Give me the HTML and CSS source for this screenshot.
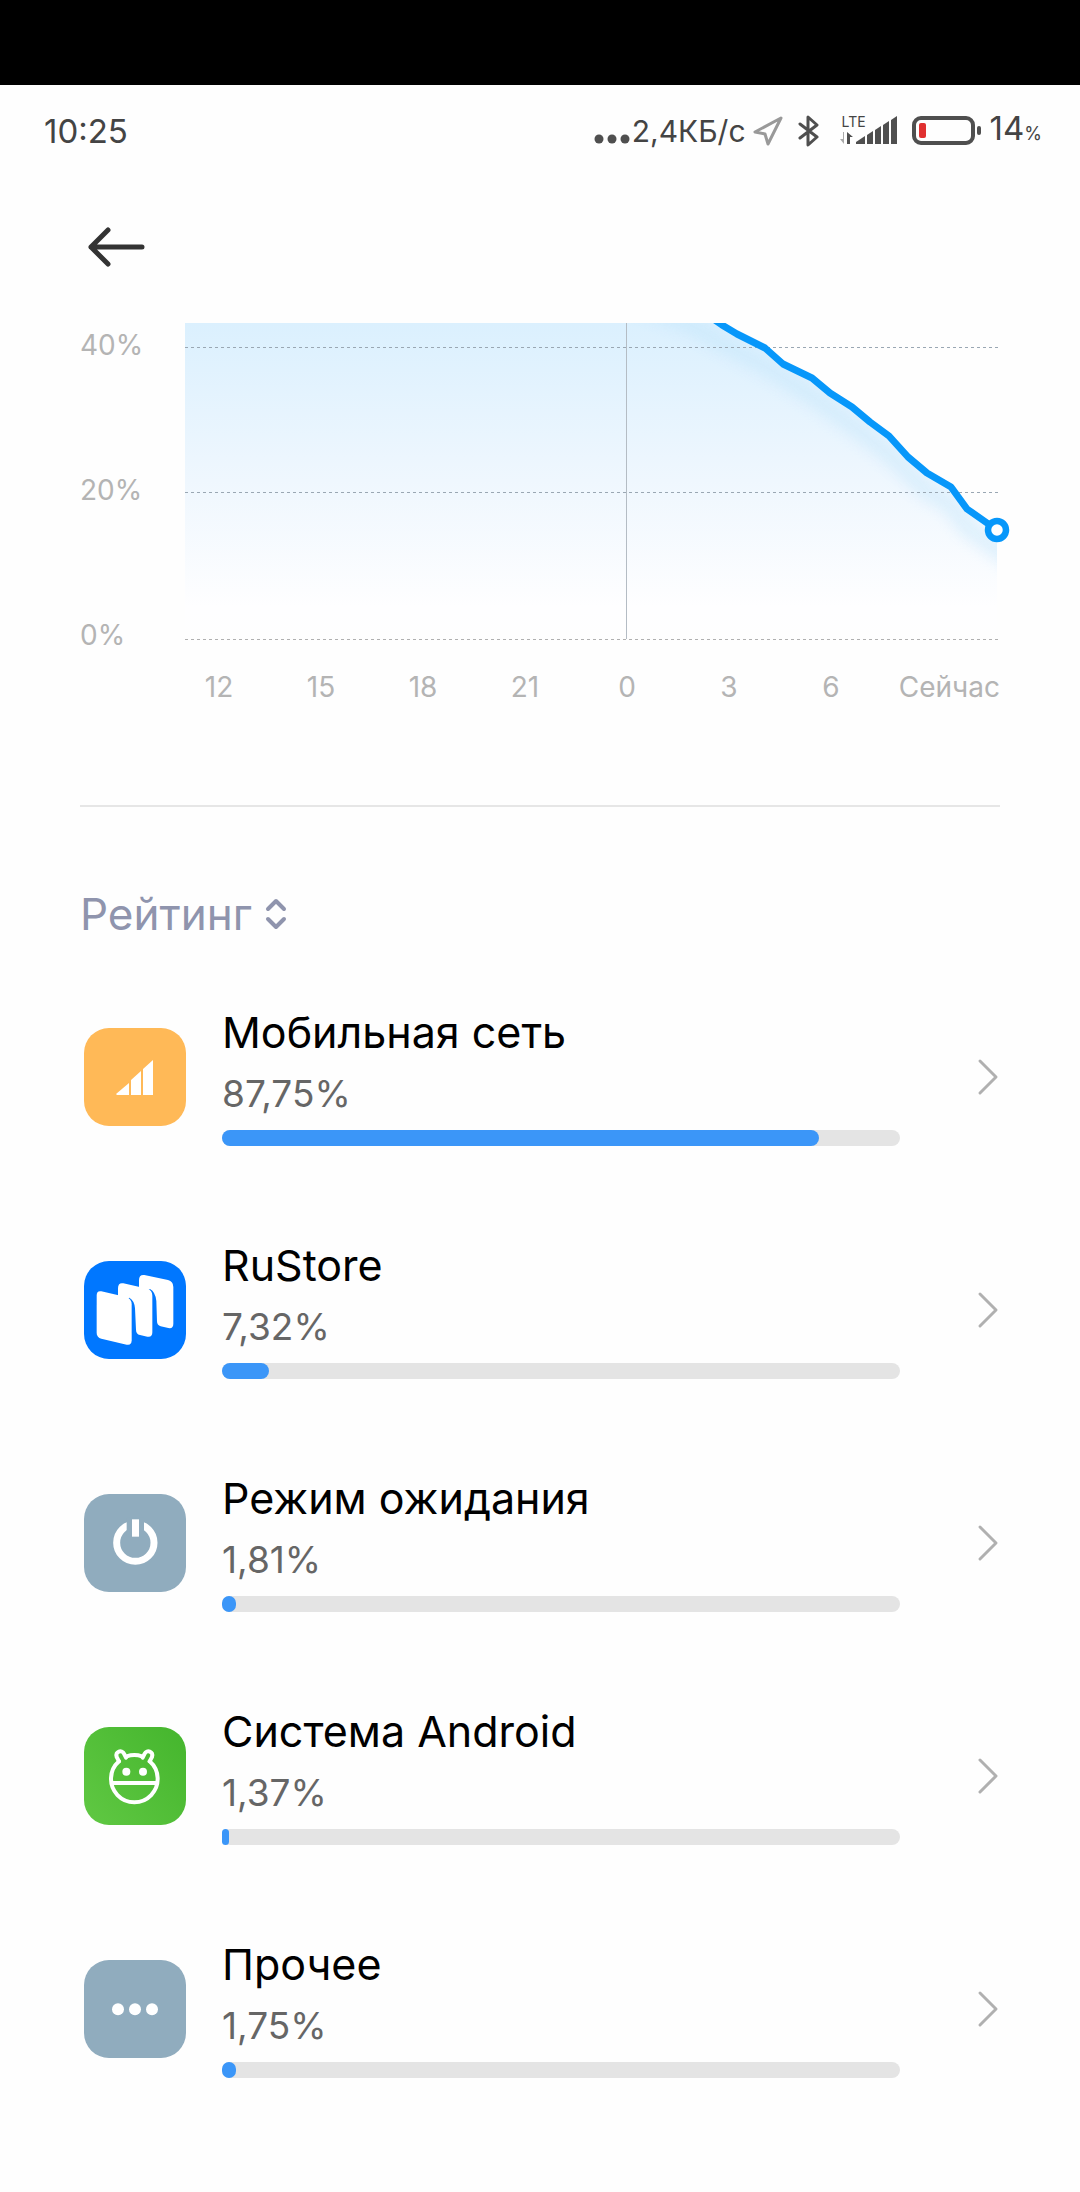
FILE: index.html
```html
<!DOCTYPE html>
<html lang="ru">
<head>
    <meta charset="UTF-8">
    <meta name="viewport" content="width=device-width, initial-scale=1.0">
    <title>Расход заряда</title>
    <link rel="stylesheet" href="styles.css">
</head>
<body>

    <div class="cutout"></div>

    <!-- Status bar -->
    <div class="status-bar">
        <span class="status-time">10:25</span>
        <div class="status-icons">
            <svg class="icon-dots" width="36" height="32" viewBox="0 0 36 32" fill="#4f4f4f">
                <circle cx="5" cy="24" r="4.5"/>
                <circle cx="18" cy="24" r="4.5"/>
                <circle cx="31" cy="24" r="4.5"/>
            </svg>
            <span class="status-speed">2,4КБ/с</span>
            <svg class="icon-location" width="32" height="32" viewBox="0 0 32 32">
                <path d="M29 3 L3 17 L13 19 L16 29 Z" fill="none" stroke="#999" stroke-width="3" stroke-linejoin="round"/>
            </svg>
            <svg class="icon-bluetooth" width="22" height="32" viewBox="0 0 22 32">
                <path d="M2 9 L19 22 L10 30 V2 L19 10 L2 23" fill="none" stroke="#4f4f4f" stroke-width="3" stroke-linejoin="round" stroke-linecap="round"/>
            </svg>
            <div class="signal">
                <span class="signal-type">LTE</span>
                <svg width="58" height="32" viewBox="0 0 58 32" fill="#4f4f4f">
                    <path d="M16 29 V27 L25 21 V29 Z"/>
                    <path d="M27 20 L33 16 V29 H27 Z"/>
                    <path d="M35 15 L41 11 V29 H35 Z"/>
                    <path d="M43 10 L49 6 V29 H43 Z"/>
                    <path d="M51 5 L57 1 V29 H51 Z"/>
                    <path d="M7 29 V17 L13 22 H10 V29 Z"/>
                    <path d="M4 17 V29 L0 24 H3 V17 Z" fill="#aaa"/>
                </svg>
            </div>
            <svg class="icon-battery" width="70" height="32" viewBox="0 0 70 32">
                <rect x="2" y="3" width="59" height="25" rx="7" fill="none" stroke="#4f4f4f" stroke-width="4"/>
                <rect x="7" y="8" width="7" height="15" rx="2" fill="#e03030"/>
                <rect x="65" y="11" width="4" height="9" rx="2" fill="#4f4f4f"/>
            </svg>
            <div class="status-level">14<small>%</small></div>
        </div>
    </div>

    <!-- Header -->
    <header class="header">
        <button type="button" class="back-btn" aria-label="Назад">
            <svg width="60" height="44" viewBox="0 0 60 44">
                <path d="M55 22 H4 M21 5 L4 22 L21 39" fill="none" stroke="#333" stroke-width="5" stroke-linecap="round" stroke-linejoin="round"/>
            </svg>
        </button>
    </header>

    <main class="content">

        <!-- Battery chart -->
        <section class="chart">
            <div class="chart-levels">
                <span>40%</span>
                <span>20%</span>
                <span>0%</span>
            </div>
            <svg class="chart-plot" viewBox="0 0 813 320">
                <defs>
                    <linearGradient id="areaFill" x1="0" y1="0" x2="0" y2="1">
                        <stop offset="0" stop-color="#dbf0fe"/>
                        <stop offset="0.5" stop-color="#eff7fe"/>
                        <stop offset="0.9" stop-color="#fefeff"/>
                        <stop offset="1" stop-color="#fefefe"/>
                    </linearGradient>
                    <filter id="soft" x="-10%" y="-20%" width="120%" height="140%">
                        <feGaussianBlur stdDeviation="7"/>
                    </filter>
                    <clipPath id="plotClip">
                        <rect x="0" y="0" width="830" height="320"/>
                    </clipPath>
                    <clipPath id="areaClip">
                        <path d="M0 0 H533 L552 11 L580 25 L598 41 L627 55 L645 70 L667 84 L685 99 L704 113 L723 134 L742 150 L766 164 L782 186 L812 207 V316 H0 Z"/>
                    </clipPath>
                </defs>
                <g clip-path="url(#areaClip)">
                    <rect width="812" height="316" fill="url(#areaFill)"/>
                    <polyline points="440,-25 510,4 533,18 580,43 627,73 667,102 704,131 742,168 766,182 782,204 830,240" fill="none" stroke="#bfe4fb" stroke-width="18" opacity="0.42" filter="url(#soft)"/>
                </g>
                <g stroke="#9aa7b3" stroke-width="1" stroke-dasharray="3 3">
                    <path d="M0 24.5 H813"/>
                    <path d="M0 169.5 H813"/>
                    <path d="M0 316.5 H813" stroke="#b0b0b0"/>
                </g>
                <path d="M441.5 0 V316" stroke="#b4bcc4" stroke-width="1"/>
                <polyline clip-path="url(#plotClip)" points="510,-17 537,2 552,11 580,25 598,41 627,55 645,70 667,84 685,99 704,113 723,134 742,150 766,164 782,186 812,207" fill="none" stroke="#0797fa" stroke-width="7" stroke-linejoin="round"/>
                <circle cx="812" cy="207" r="9" fill="#fff" stroke="#0797fa" stroke-width="6.5"/>
            </svg>
        </section>
        <div class="chart-hours">
            <span>12</span>
            <span>15</span>
            <span>18</span>
            <span>21</span>
            <span>0</span>
            <span>3</span>
            <span>6</span>
            <span class="chart-now">Сейчас</span>
        </div>

        <hr class="divider">

        <!-- Sort switch -->
        <button type="button" class="sort-btn">
            Рейтинг
            <svg width="24" height="32" viewBox="0 0 24 32">
                <path d="M4 11 L12 3 L20 11 M4 21 L12 29 L20 21" fill="none" stroke="#8f94ad" stroke-width="4" stroke-linecap="round" stroke-linejoin="round"/>
            </svg>
        </button>

        <!-- Usage list -->
        <ul class="usage-list">
            <li>
                <a href="#" class="usage-item">
                    <svg class="app-icon" viewBox="0 0 102 98">
                        <rect width="102" height="98" rx="25" fill="#ffb957"/>
                        <path d="M32 66 L45 55 V67 H33 Z M47 52 L57 43 V67 H47 Z M59 41 L69 32 V67 H59 Z" fill="#fff"/>
                    </svg>
                    <div class="usage-body">
                        <span class="usage-name">Мобильная сеть</span>
                        <span class="usage-value">87,75%</span>
                        <div class="usage-bar"><div class="usage-fill" style="width: 88%"></div></div>
                    </div>
                    <svg class="chevron" viewBox="0 0 24 40"><path d="M4 4 L20 20 L4 36"/></svg>
                </a>
            </li>
            <li>
                <a href="#" class="usage-item">
                    <svg class="app-icon" viewBox="0 0 306 294">
                        <rect width="306" height="294" rx="75" fill="#0077ff"/>
                        <g fill="#fff">
                            <path d="M38 104 Q38 88 52 91 L126 108 Q143 113 143 130 V238 Q143 254 128 251 L52 233 Q38 229 38 215 Z"/>
                            <path d="M102 106 V82 Q102 64 118 67 L190 83 Q205 88 205 104 V214 Q205 230 190 227 L168 222 Q156 219 156 206 L153 142 Q151 118 136 110 L126 114 Z"/>
                            <path d="M165 84 V58 Q165 40 181 42 L252 57 Q268 61 268 78 V188 Q268 204 253 201 L230 196 Q219 193 219 181 L217 120 Q214 92 198 84 L188 90 Z"/>
                        </g>
                    </svg>
                    <div class="usage-body">
                        <span class="usage-name">RuStore</span>
                        <span class="usage-value">7,32%</span>
                        <div class="usage-bar"><div class="usage-fill" style="width: 7%"></div></div>
                    </div>
                    <svg class="chevron" viewBox="0 0 24 40"><path d="M4 4 L20 20 L4 36"/></svg>
                </a>
            </li>
            <li>
                <a href="#" class="usage-item">
                    <svg class="app-icon" viewBox="0 0 306 294">
                        <rect width="306" height="294" rx="75" fill="#90acbe"/>
                        <circle cx="154" cy="146" r="56" fill="none" stroke="#fff" stroke-width="21"/>
                        <rect x="128" y="70" width="52" height="58" fill="#90acbe"/>
                        <rect x="144" y="76" width="21" height="52" fill="#fff"/>
                    </svg>
                    <div class="usage-body">
                        <span class="usage-name">Режим ожидания</span>
                        <span class="usage-value">1,81%</span>
                        <div class="usage-bar"><div class="usage-fill" style="width: 2%"></div></div>
                    </div>
                    <svg class="chevron" viewBox="0 0 24 40"><path d="M4 4 L20 20 L4 36"/></svg>
                </a>
            </li>
            <li>
                <a href="#" class="usage-item">
                    <svg class="app-icon" viewBox="0 0 306 294">
                        <defs>
                            <linearGradient id="green" x1="0" y1="1" x2="1" y2="0.2">
                                <stop offset="0" stop-color="#60c843"/>
                                <stop offset="1" stop-color="#47b72f"/>
                            </linearGradient>
                        </defs>
                        <rect width="306" height="294" rx="75" fill="url(#green)"/>
                        <g fill="none" stroke="#fff" stroke-width="12" stroke-linecap="round">
                            <path d="M128 88 A70 70 0 0 1 174 88 M197 103 A70 70 0 1 1 105 103"/>
                            <path d="M105 103 L98 90 C92 73 114 67 120 80 L126 92"/>
                            <path d="M197 103 L204 90 C210 73 188 67 182 80 L176 92"/>
                            <path d="M84 168 H218"/>
                        </g>
                        <circle cx="127" cy="134" r="12" fill="#fff"/>
                        <circle cx="177" cy="134" r="12" fill="#fff"/>
                    </svg>
                    <div class="usage-body">
                        <span class="usage-name">Система Android</span>
                        <span class="usage-value">1,37%</span>
                        <div class="usage-bar"><div class="usage-fill" style="width: 1%"></div></div>
                    </div>
                    <svg class="chevron" viewBox="0 0 24 40"><path d="M4 4 L20 20 L4 36"/></svg>
                </a>
            </li>
            <li>
                <a href="#" class="usage-item">
                    <svg class="app-icon" viewBox="0 0 306 294">
                        <rect width="306" height="294" rx="75" fill="#90acbe"/>
                        <g fill="#fff">
                            <circle cx="102" cy="148" r="18"/>
                            <circle cx="153" cy="148" r="18"/>
                            <circle cx="204" cy="148" r="18"/>
                        </g>
                    </svg>
                    <div class="usage-body">
                        <span class="usage-name">Прочее</span>
                        <span class="usage-value">1,75%</span>
                        <div class="usage-bar"><div class="usage-fill" style="width: 2%"></div></div>
                    </div>
                    <svg class="chevron" viewBox="0 0 24 40"><path d="M4 4 L20 20 L4 36"/></svg>
                </a>
            </li>
        </ul>
    </main>

</body>
</html>
```
FILE: styles.css
```css
* {
    box-sizing: border-box;
}

body {
    font-family: Inter, "Liberation Sans", sans-serif;
    margin: 0;
    padding: 0;
    background-color: #fefefe;
    color: #000;
}

svg {
    display: block;
    flex-shrink: 0;
}

button {
    font: inherit;
    padding: 0;
    border: none;
    background: none;
    cursor: pointer;
}

.cutout {
    height: 85px;
    background-color: #000;
}

/* Status bar */
.status-bar {
    display: flex;
    justify-content: space-between;
    align-items: center;
    height: 92px;
    padding: 0 38px 0 44px;
    font-size: 33px;
    line-height: 40px;
    color: #444;
}

.status-icons {
    display: flex;
    align-items: center;
}

.status-speed {
    font-size: 30px;
    margin: 0 6px 0 2px;
}

.icon-bluetooth {
    margin-left: 14px;
}

.signal {
    position: relative;
    margin-left: 20px;
}

.signal-type {
    position: absolute;
    top: 0;
    left: 2px;
    font-size: 14px;
    line-height: 14px;
}

.icon-battery {
    margin: 0 8px 0 14px;
}

.status-level {
    display: flex;
    align-items: baseline;
}

.status-level small {
    font-size: 18px;
}

/* Header */
.header {
    display: flex;
    align-items: center;
    height: 146px;
    padding: 0 87px 6px;
}

/* Chart */
.content {
    padding: 0 80px;
}

.chart {
    display: grid;
    grid-template-columns: 105px 1fr;
    margin-right: 2px;
}

.chart-levels {
    display: flex;
    flex-direction: column;
    justify-content: space-between;
    padding-top: 2px;
    font-size: 28px;
    line-height: 40px;
    color: #b4b4b4;
    height: 332px;
    margin-bottom: -12px;
}

.chart-plot {
    width: 100%;
    overflow: visible;
}

.chart-hours {
    display: grid;
    grid-template-columns: repeat(7, 102fr) 118fr;
    margin-top: 24px;
    padding-left: 88px;
    font-size: 28px;
    line-height: 40px;
    text-align: center;
    color: #b4b4b4;
}

.chart-now {
    justify-self: end;
}

.divider {
    height: 2px;
    margin: 98px 0 77px;
    border: none;
    background-color: #e6e6e6;
}

.sort-btn {
    display: flex;
    align-items: center;
    gap: 12px;
    font-size: 44px;
    line-height: 60px;
    color: #8f94ad;
}

/* Usage list */
.usage-list {
    list-style: none;
    margin: 16px 0 0;
    padding: 0;
}

.usage-item {
    display: flex;
    align-items: center;
    padding: 42px 0 42px 4px;
    color: inherit;
    text-decoration: none;
}

.app-icon {
    width: 102px;
    height: 98px;
}

.usage-body {
    flex: 1;
    display: flex;
    flex-direction: column;
    margin: 0 76px 0 36px;
    padding-bottom: 5px;
}

.usage-name {
    font-size: 43px;
    line-height: 60px;
}

.usage-value {
    margin: 8px 0 12px;
    font-size: 37px;
    line-height: 48px;
    color: #666;
}

.usage-bar {
    height: 16px;
    border-radius: 8px;
    background-color: #e4e4e4;
}

.usage-fill {
    height: 16px;
    border-radius: 8px;
    background-color: #3b96f8;
}

.chevron {
    width: 24px;
    height: 40px;
    fill: none;
    stroke: #b0b0b0;
    stroke-width: 3;
    stroke-linecap: round;
    stroke-linejoin: round;
}
```
